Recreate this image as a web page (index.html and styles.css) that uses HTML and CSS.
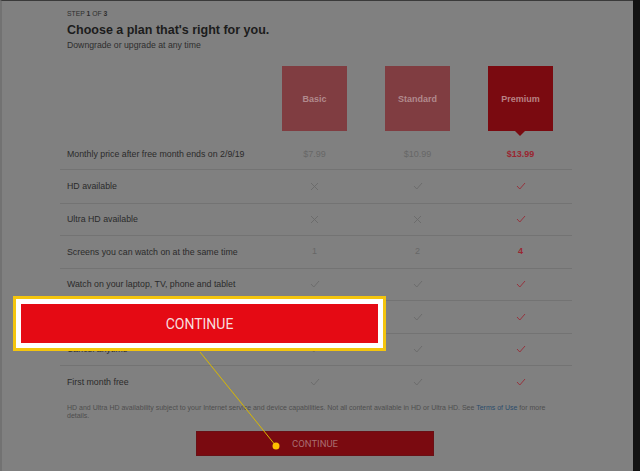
FILE: index.html
```html
<!DOCTYPE html>
<html>
<head>
	<title>Choose a plan</title>
	<meta name="viewport" content="width=device-width, initial-scale=1.0" />
	<link rel="stylesheet" href="styles.css">
</head>
<body>
	<div class="screen">
		<div class="page">
			<p class="step">STEP <b>1</b> OF <b>3</b></p>
			<h1 class="title">Choose a plan that's right for you.</h1>
			<p class="subtitle">Downgrade or upgrade at any time</p>

			<div class="grid plans">
				<div></div>
				<div class="plan">Basic</div>
				<div class="plan">Standard</div>
				<div class="plan selected">Premium</div>
			</div>

			<div class="grid row price">
				<div class="label">Monthly price after free month ends on 2/9/19</div>
				<div class="cell">$7.99</div>
				<div class="cell">$10.99</div>
				<div class="cell hot">$13.99</div>
			</div>
			<div class="grid row">
				<div class="label">HD available</div>
				<div class="cell"><svg class="no" viewBox="0 0 9 9"><path d="M1 1L8 8M8 1L1 8"/></svg></div>
				<div class="cell"><svg class="yes" viewBox="0 0 10 8"><path d="M1 4L3.8 7L9 1"/></svg></div>
				<div class="cell hot"><svg class="yes" viewBox="0 0 10 8"><path d="M1 4L3.8 7L9 1"/></svg></div>
			</div>
			<div class="grid row">
				<div class="label">Ultra HD available</div>
				<div class="cell"><svg class="no" viewBox="0 0 9 9"><path d="M1 1L8 8M8 1L1 8"/></svg></div>
				<div class="cell"><svg class="no" viewBox="0 0 9 9"><path d="M1 1L8 8M8 1L1 8"/></svg></div>
				<div class="cell hot"><svg class="yes" viewBox="0 0 10 8"><path d="M1 4L3.8 7L9 1"/></svg></div>
			</div>
			<div class="grid row">
				<div class="label">Screens you can watch on at the same time</div>
				<div class="cell">1</div>
				<div class="cell">2</div>
				<div class="cell hot">4</div>
			</div>
			<div class="grid row">
				<div class="label">Watch on your laptop, TV, phone and tablet</div>
				<div class="cell"><svg class="yes" viewBox="0 0 10 8"><path d="M1 4L3.8 7L9 1"/></svg></div>
				<div class="cell"><svg class="yes" viewBox="0 0 10 8"><path d="M1 4L3.8 7L9 1"/></svg></div>
				<div class="cell hot"><svg class="yes" viewBox="0 0 10 8"><path d="M1 4L3.8 7L9 1"/></svg></div>
			</div>
			<div class="grid row">
				<div class="label">Unlimited movies and TV shows</div>
				<div class="cell"><svg class="yes" viewBox="0 0 10 8"><path d="M1 4L3.8 7L9 1"/></svg></div>
				<div class="cell"><svg class="yes" viewBox="0 0 10 8"><path d="M1 4L3.8 7L9 1"/></svg></div>
				<div class="cell hot"><svg class="yes" viewBox="0 0 10 8"><path d="M1 4L3.8 7L9 1"/></svg></div>
			</div>
			<div class="grid row">
				<div class="label">Cancel anytime</div>
				<div class="cell"><svg class="yes" viewBox="0 0 10 8"><path d="M1 4L3.8 7L9 1"/></svg></div>
				<div class="cell"><svg class="yes" viewBox="0 0 10 8"><path d="M1 4L3.8 7L9 1"/></svg></div>
				<div class="cell hot"><svg class="yes" viewBox="0 0 10 8"><path d="M1 4L3.8 7L9 1"/></svg></div>
			</div>
			<div class="grid row">
				<div class="label">First month free</div>
				<div class="cell"><svg class="yes" viewBox="0 0 10 8"><path d="M1 4L3.8 7L9 1"/></svg></div>
				<div class="cell"><svg class="yes" viewBox="0 0 10 8"><path d="M1 4L3.8 7L9 1"/></svg></div>
				<div class="cell hot"><svg class="yes" viewBox="0 0 10 8"><path d="M1 4L3.8 7L9 1"/></svg></div>
			</div>

			<p class="note">HD and Ultra HD availability subject to your Internet service and device capabilities. Not all content available in HD or Ultra HD. See <a href="#">Terms of Use</a> for more details.</p>

			<div class="actions">
				<button class="continue">CONTINUE</button>
			</div>
		</div>

		<!-- annotation laid over the screenshot -->
		<svg class="pointer" width="640" height="471">
			<line x1="200" y1="352" x2="276" y2="446" />
			<circle cx="276" cy="446" r="3.5" />
		</svg>
		<div class="callout">
			<div class="callout-btn">CONTINUE</div>
		</div>
	</div>
</body>
</html>
```

FILE: styles.css
```css
html, body {
	margin: 0;
	width: 640px;
	height: 471px;
	overflow: hidden;
	background: #121212;
	font-family: "Liberation Sans", Arial, sans-serif;
}
.screen {
	position: relative;
	width: 631px;
	height: 470px;
	background: #808080;
	border-top: 1px solid #3a3a3a;
	border-left: 2px solid #727272;
}
.page {
	padding-left: 58px;
	width: 512px;
}
.step {
	margin: 0;
	padding: 9px 0 0 7px;
	font-size: 6.8px;
	line-height: 8px;
	color: #2e2e2e;
}
.title {
	margin: 4px 0 0 7px;
	font-size: 12.5px;
	line-height: 16px;
	color: #1c1c1c;
}
.subtitle {
	margin: 2px 0 0 7px;
	font-size: 8.7px;
	line-height: 11px;
	color: #2e2e2e;
}
.grid {
	display: grid;
	grid-template-columns: 203px 103px 103px 103px;
}
.plans {
	margin-top: 15px;
}
.plan {
	position: relative;
	justify-self: center;
	width: 65px;
	height: 65px;
	display: flex;
	align-items: center;
	justify-content: center;
	background: #803d41;
	color: #b18a8d;
	font-size: 9px;
	font-weight: bold;
}
.plan.selected {
	background: #7a0a10;
	color: #b88184;
}
.plan.selected::after {
	content: "";
	position: absolute;
	left: 27px;
	bottom: -5px;
	border-left: 5px solid transparent;
	border-right: 5px solid transparent;
	border-top: 5px solid #7a0a10;
}
.row {
	box-sizing: border-box;
	height: 32.5px;
	align-items: center;
	border-top: 1px solid #737373;
}
.row.price {
	height: 39px;
	border-top: none;
	padding-top: 8px;
	border-bottom: 1px solid #737373;
}
.row.price + .row {
	border-top: none;
}
.label {
	padding-left: 7px;
	font-size: 8.8px;
	color: #2b2b2b;
}
.cell {
	text-align: center;
	font-size: 9px;
	color: #676767;
	line-height: 9px;
}
.cell.hot {
	color: #9a2631;
	font-weight: bold;
}
.cell svg {
	display: block;
	margin: 0 auto;
	fill: none;
	stroke: #6a6a6a;
	stroke-width: 0.9;
}
.cell .yes {
	width: 10px;
	height: 8px;
}
.cell .no {
	width: 9px;
	height: 9px;
}
.cell.hot svg {
	stroke: #992a35;
}
.note {
	margin: 6px 0 0 7px;
	width: 492px;
	font-size: 7px;
	line-height: 8px;
	color: #4e4e4e;
}
.note a {
	color: #2b4c6b;
	text-decoration: none;
}
.actions {
	margin-top: 11px;
	padding-left: 136px;
}
.continue {
	display: block;
	width: 238px;
	height: 25px;
	background: #7a0a10;
	border: 1px solid #6a1015;
	color: #a96d70;
	font-family: Roboto, "Liberation Sans", sans-serif;
	font-size: 9.5px;
	padding: 0;
}
.pointer {
	position: absolute;
	left: -2px;
	top: -1px;
}
.pointer line {
	stroke: #d8b800;
	stroke-width: 1;
}
.pointer circle {
	fill: #ffbf00;
}
.callout {
	position: absolute;
	left: 11px;
	top: 295px;
	width: 357px;
	height: 39px;
	border: 3px solid #f4c50e;
	padding: 5px;
	background: #fff;
}
.callout-btn {
	height: 39px;
	background: #e50a14;
	display: flex;
	align-items: center;
	justify-content: center;
	color: #f7dede;
	font-family: Roboto, "Liberation Sans", sans-serif;
	font-size: 14px;
}
```
